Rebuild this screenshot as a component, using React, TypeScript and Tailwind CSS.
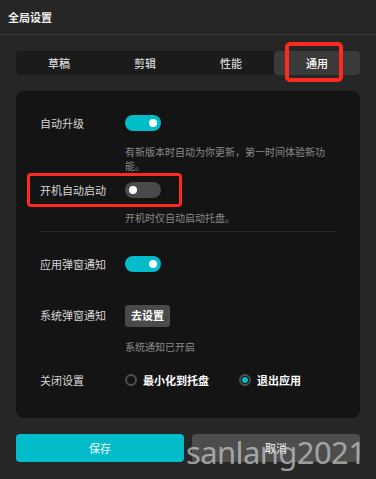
const TABS = ["草稿", "剪辑", "性能", "通用"];

function Toggle({ on }: { on: boolean }) {
  return (
    <div
      className={[
        "w-[36px] h-[16px] rounded-full flex items-center px-[4px]",
        on ? "bg-[#00bdc9] justify-end" : "bg-[#4a4a4a] justify-start",
      ].join(" ")}
    >
      <div className="w-[8px] h-[8px] rounded-full bg-white" />
    </div>
  );
}

function Radio({ checked, label }: { checked: boolean; label: string }) {
  return (
    <div className="flex items-center gap-[6px]">
      <div className="w-[12px] h-[12px] rounded-full border-2 border-[#4f4f4f] flex items-center justify-center">
        {checked && <div className="w-[6px] h-[6px] rounded-full bg-[#00bdc9]" />}
      </div>
      <span className="text-[11px] font-bold text-white">{label}</span>
    </div>
  );
}

function Row({ label, children }: { label: string; children: React.ReactNode }) {
  return (
    <div className="flex items-center">
      <span className="w-[85px] text-[11px] text-[#d6d6d6]">{label}</span>
      {children}
    </div>
  );
}

function Desc({ children }: { children: React.ReactNode }) {
  return (
    <div className="ml-[85px] w-[205px] text-[10px] leading-[14px] text-[#8a8a8a]">{children}</div>
  );
}

export default function App() {
  return (
    <div
      className="relative w-[376px] h-[479px] overflow-hidden bg-[#262626] flex flex-col"
      style={{ fontFamily: '"Noto Sans CJK SC", "Noto Sans", sans-serif' }}
    >
      {/* Title bar */}
      <div className="h-[35px] shrink-0 px-2 flex items-center border-b border-[#3b3b3b]">
        <span className="text-[11px] font-bold text-[#eeeeee]">全局设置</span>
      </div>

      <div className="px-4 flex flex-col">
        {/* Tabs */}
        <div className="mt-[16px] h-[24px] rounded-[4px] bg-[#1b1b1b] grid grid-cols-4">
          {TABS.map((t) => (
            <div
              key={t}
              className={[
                "flex items-center justify-center rounded-[4px] text-[11px] font-medium",
                t === "通用" ? "bg-[#3a3a3a] text-white" : "text-[#d4d4d4]",
              ].join(" ")}
            >
              {t}
            </div>
          ))}
        </div>

        {/* Settings panel */}
        <div className="mt-[16px] h-[327px] rounded-lg bg-[#141414] pl-6 pr-6 pt-[24px] flex flex-col">
          <Row label="自动升级">
            <Toggle on />
          </Row>
          <div className="mt-[13px]">
            <Desc>有新版本时自动为你更新，第一时间体验新功能。</Desc>
          </div>

          <div className="mt-[9px]">
            <Row label="开机自动启动">
              <Toggle on={false} />
            </Row>
          </div>
          <div className="mt-[13px]">
            <Desc>开机时仅自动启动托盘。</Desc>
          </div>

          <div className="mt-[6px] h-px bg-[#2a2a2a]" />

          <div className="mt-[24px]">
            <Row label="应用弹窗通知">
              <Toggle on />
            </Row>
          </div>

          <div className="mt-[32px]">
            <Row label="系统弹窗通知">
              <div className="h-[22px] w-[45px] rounded-[3px] bg-[#4a4a4a] flex items-center justify-center text-[11px] font-bold text-white">
                去设置
              </div>
            </Row>
          </div>
          <div className="mt-[13px]">
            <Desc>系统通知已开启</Desc>
          </div>

          <div className="mt-[18px] h-[16px]">
            <Row label="关闭设置">
              <div className="flex items-center gap-[30px]">
                <Radio checked={false} label="最小化到托盘" />
                <Radio checked label="退出应用" />
              </div>
            </Row>
          </div>
        </div>

        {/* Footer buttons */}
        <div className="mt-[16px] grid grid-cols-2 gap-2">
          <div className="h-[28px] rounded-[4px] bg-[#00bdc9] flex items-center justify-center text-[11px] text-white">
            保存
          </div>
          <div className="h-[28px] rounded-[4px] bg-[#4d4d4d] flex items-center justify-center text-[11px] text-white">
            取消
          </div>
        </div>
      </div>

      {/* Annotation boxes */}
      <div className="absolute left-[285px] top-[42px] w-[58px] h-[40px] rounded-[5px] border-[4px] border-[#ff2a1f]" />
      <div className="absolute left-[27px] top-[173px] w-[155px] h-[34px] rounded-[4px] border-[3px] border-[#ff2a1f]" />

      {/* Watermark */}
      <div
        className="absolute left-[186px] top-[437px] text-[31px] leading-[31px] text-[#bdbdbd]/80"
        style={{ fontFamily: '"Noto Sans", "Liberation Sans", sans-serif', letterSpacing: "-0.6px" }}
      >
        sanlang2021
      </div>
    </div>
  );
}
